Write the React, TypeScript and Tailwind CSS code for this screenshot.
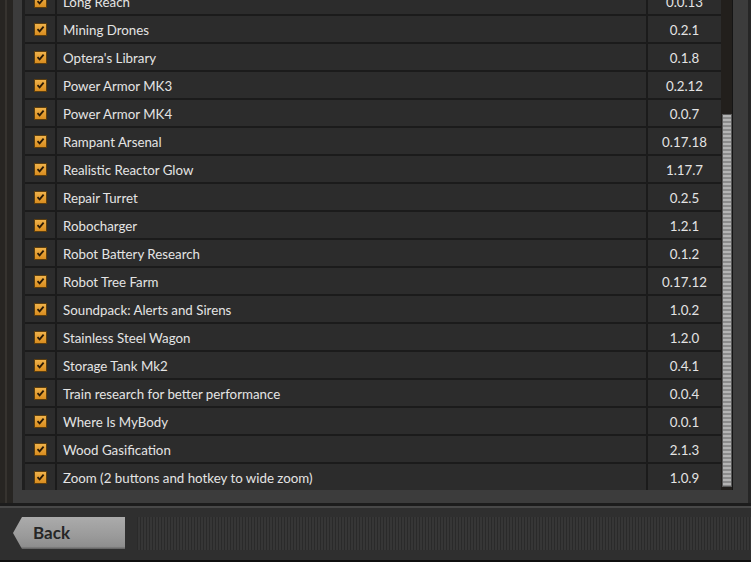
import { Fragment } from 'react'

const mods: [string, string][] = [
  ['Long Reach', '0.0.13'],
  ['Mining Drones', '0.2.1'],
  ["Optera's Library", '0.1.8'],
  ['Power Armor MK3', '0.2.12'],
  ['Power Armor MK4', '0.0.7'],
  ['Rampant Arsenal', '0.17.18'],
  ['Realistic Reactor Glow', '1.17.7'],
  ['Repair Turret', '0.2.5'],
  ['Robocharger', '1.2.1'],
  ['Robot Battery Research', '0.1.2'],
  ['Robot Tree Farm', '0.17.12'],
  ['Soundpack: Alerts and Sirens', '1.0.2'],
  ['Stainless Steel Wagon', '1.2.0'],
  ['Storage Tank Mk2', '0.4.1'],
  ['Train research for better performance', '0.0.4'],
  ['Where Is MyBody', '0.0.1'],
  ['Wood Gasification', '2.1.3'],
  ['Zoom (2 buttons and hotkey to wide zoom)', '1.0.9'],
]

function Checkbox() {
  return (
    <div className="w-[13px] h-[13px] border border-[#5e3f0e] bg-[linear-gradient(180deg,#f0b24a,#d98d1f)] flex items-center justify-center">
      <svg width="9" height="8" viewBox="0 0 9 8">
        <path d="M1.5 4.2 L3.6 6.3 L7.6 1.6" fill="none" stroke="#2a1a06" strokeWidth="1.8" />
      </svg>
    </div>
  )
}

export default function App() {
  return (
    <div className="w-[751px] h-[562px] bg-[#2f2f2f] flex flex-col overflow-hidden font-['Lato','Liberation_Sans',sans-serif]">
      {/* list area */}
      <div className="h-[503px] flex shrink-0">
        {/* left edge */}
        <div className="w-[13px] flex bg-[#272522]">
          <div className="w-[5px]" />
          <div className="w-[2px] bg-[#36332f]" />
        </div>

        {/* frame */}
        <div className="w-[735px] bg-[#3c3c3c] pl-[9px] pr-[15px] pb-[13px]">
          <div className="h-full flex border-l-[3px] border-[#1f1f1f] overflow-hidden">
            {/* rows, scrolled so the first one is cut */}
            <div className="w-[696px] h-full overflow-hidden">
              <div className="-mt-[12px] flex flex-col gap-[2px] bg-[#1b1b1b]">
                {mods.map(([name, version]) => (
                  <Fragment key={name}>
                    <div className="h-[26px] flex gap-[2px] text-[13.3px] text-[#e4e4e4]">
                      <div className="w-[30px] bg-[#2c2c2c] flex items-center justify-center">
                        <Checkbox />
                      </div>
                      <div className="w-[589px] bg-[#2c2c2c] pl-[6px] pt-[4px] flex items-center whitespace-nowrap">
                        {name}
                      </div>
                      <div className="w-[73px] bg-[#2c2c2c] pt-[4px] flex items-center justify-center">
                        {version}
                      </div>
                    </div>
                  </Fragment>
                ))}
              </div>
            </div>

            {/* scrollbar */}
            <div className="w-[12px] h-full bg-[#221f1c] pt-[114px] pl-[1px] border-r border-[#151515]">
              <div className="w-[10px] h-[373px] border border-[#5a5a5a] bg-[repeating-linear-gradient(180deg,#b4b4b4_0px,#b4b4b4_2px,#8c8c8c_2px,#8c8c8c_4px)]" />
            </div>
          </div>
        </div>

        <div className="w-[3px] bg-[#262626]" />
      </div>

      {/* bottom bar */}
      <div className="h-[3px] bg-[#1c1c1c] shrink-0" />
      <div className="h-[2px] bg-[#484848] shrink-0" />
      <div className="h-[52px] flex items-start pt-[9px] shrink-0">
        <button className="ml-[13px] w-[112px] h-[32px] [clip-path:polygon(9px_0,100%_0,100%_100%,9px_100%,0_50%)] bg-[linear-gradient(180deg,#ababab_0%,#9a9a9a_60%,#8e8e8e_92%,#5e5e5e_100%)] text-left pl-[20px] text-[17px] font-bold text-[#262626]">
          Back
        </button>
        <div className="ml-[12px] flex-1 h-[33px] bg-[repeating-linear-gradient(90deg,#2a2a2a_0px,#2a2a2a_1px,#363636_1px,#363636_3px)]" />
      </div>
      <div className="flex-1 bg-[#0f0f0f]" />
    </div>
  )
}
